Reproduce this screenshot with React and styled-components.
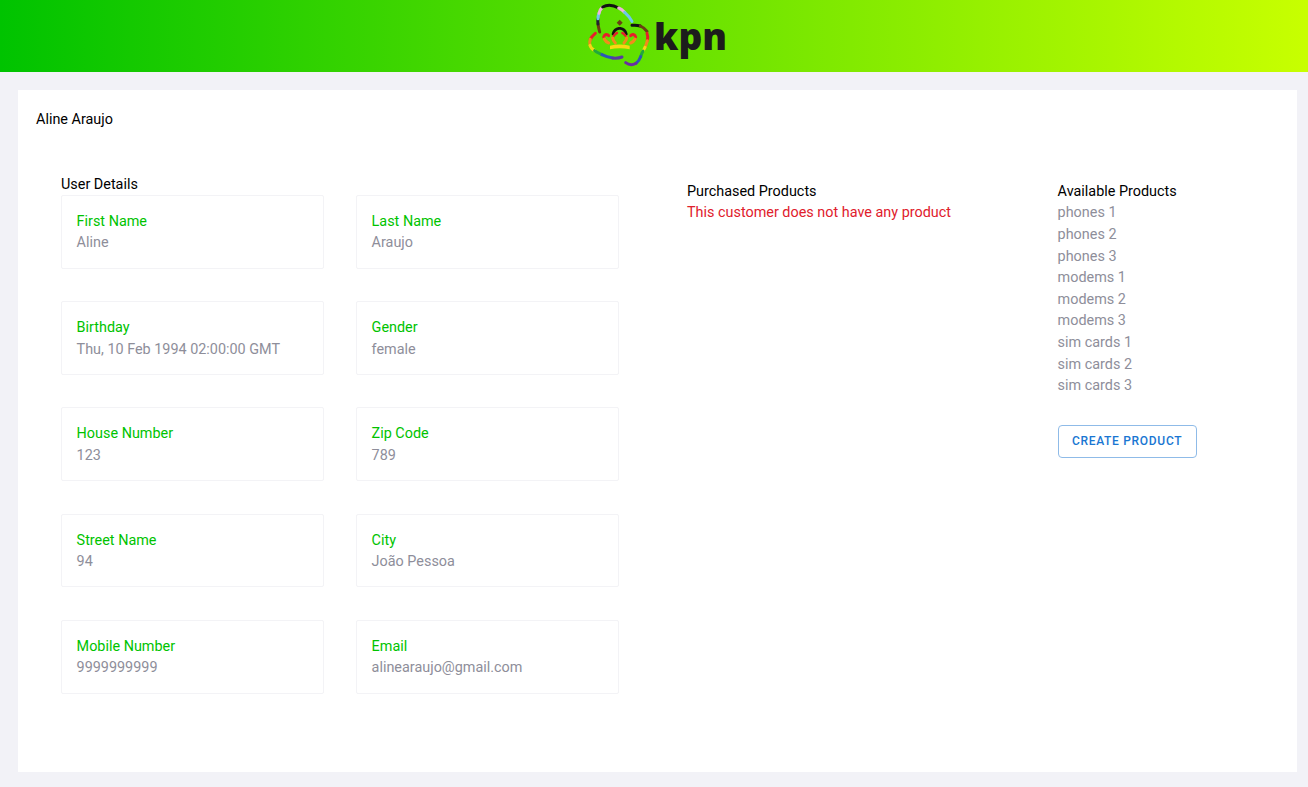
import React from 'react'
import styled, { createGlobalStyle } from 'styled-components';

const Global = createGlobalStyle`
    html, body { margin: 0; padding: 0; }
    body {
        background: #f2f2f7;
        font-family: Roboto, "Liberation Sans", sans-serif;
        font-size: 14.4px;
        line-height: 1.5;
        color: #000;
    }
`;

const Page = styled.div`
    height: 787px;
    display: flex;
    flex-direction: column;
    overflow: hidden;
`;

const Header = styled.header`
    height: 72px;
    flex: none;
    display: flex;
    justify-content: center;
    background: linear-gradient(90deg, #00c300, #c8ff00);
`;

const Logo = styled.div`
    width: 170px;
    margin-left: 2px;
    display: flex;
    align-items: flex-start;
`;

const Mark = styled.svg`
    width: 85px;
    height: 72px;
    flex: none;
    margin-left: 1.5px;
`;

const Wordmark = styled.span`
    font-family: "Open Sans", sans-serif;
    font-weight: 800;
    font-size: 37px;
    line-height: 72px;
    color: #1c1c1c;
    margin-left: -2.5px;
`;

const Main = styled.main`
    flex: 1;
    padding: 18px 11px 15px 18px;
    display: flex;
    min-height: 0;
`;

const Panel = styled.section`
    flex: 1;
    background: #fff;
    padding: 18.6px 18px 18px;
`;

const Columns = styled.div`
    display: grid;
    grid-template-columns: 626px 370.6px 1fr;
    margin: 43.4px 0 0 25px;
`;

const SideColumn = styled.div`
    padding-top: 7.2px;
`;

const DetailGrid = styled.div`
    width: 557.5px;
    margin-top: -0.2px;
    display: grid;
    grid-template-columns: 262.5px 262.5px;
    gap: 32.65px 32.5px;
`;

const DetailCard = styled.div`
    height: 73.6px;
    box-sizing: border-box;
    padding: 14.8px 14.6px;
    border: 1px solid #f3f3f6;
    border-radius: 2px;
`;

const Label = styled.div`
    color: #00c300;
`;

const Value = styled.div`
    color: #8e8e9a;
`;

const ErrorText = styled.div`
    color: #e0202c;
`;

const CreateButton = styled.button`
    display: block;
    width: 139px;
    height: 33px;
    margin-top: 27.8px;
    padding: 0;
    background: #fff;
    border: 1px solid #8fbbe8;
    border-radius: 4px;
    color: #1976d2;
    font-family: Roboto, sans-serif;
    font-size: 12px;
    font-weight: 500;
    letter-spacing: 0.7px;
    text-transform: uppercase;
`;

const details = [
    ['First Name', 'Aline'],
    ['Last Name', 'Araujo'],
    ['Birthday', 'Thu, 10 Feb 1994 02:00:00 GMT'],
    ['Gender', 'female'],
    ['House Number', '123'],
    ['Zip Code', '789'],
    ['Street Name', '94'],
    ['City', 'João Pessoa'],
    ['Mobile Number', '9999999999'],
    ['Email', 'alinearaujo@gmail.com'],
];

const products = [
    'phones 1', 'phones 2', 'phones 3',
    'modems 1', 'modems 2', 'modems 3',
    'sim cards 1', 'sim cards 2', 'sim cards 3',
];

// outline of the logo, one piece per colour
const ribbon = [
    ['#6b3f14', 'M83 96 C81 88 79 80 78 72'],
    ['#222230', 'M78 72 C77 66 77 62 78 56'],
    ['#6fc7ea', 'M78 56 C78 50 79 45 81 40'],
    ['#efb3d8', 'M81 40 C83 32 86 26 92 21'],
    ['#111', 'M92 21 C106 13 124 15 140 24'],
    ['#efb3d8', 'M140 24 C147 27 153 32 158 37'],
    ['#6fc7ea', 'M158 37 C168 46 175 54 180 64'],
    ['#111', 'M180 76 C190 75 198 76 205 78'],
    ['#6b3f14', 'M205 78 C214 82 221 88 225 94'],
    ['#e5202a', 'M225 100 C228 108 228 114 226 122'],
    ['#f28a1c', 'M226 122 C224 130 222 136 219 142'],
    ['#f6d813', 'M219 142 C217 146 215 150 213 153'],
    ['#22a83c', 'M213 153 C210 158 208 164 206 170'],
    ['#2d55b8', 'M206 170 C203 178 198 185 192 190'],
    ['#6a2fa0', 'M192 190 C182 196 170 195 161 188'],
    ['#e5202a', 'M70 100 C64 105 58 111 55 118'],
    ['#f28a1c', 'M55 118 C53 124 52 130 54 136'],
    ['#f6d813', 'M54 136 C56 143 61 148 68 152'],
    ['#22a83c', 'M68 152 C75 157 82 160 90 164'],
    ['#2d55b8', 'M90 164 C100 169 110 172 122 174'],
    ['#5a3aa0', 'M122 174 C132 175 142 174 150 171'],
];

const crown = [
    ['#e5202a', 'M95 111 C97 102 106 101 110 107', 9],
    ['#f28a1c', 'M97 117 C100 123 104 127 110 129', 9],
    ['#111', 'M123 102 C126 90 134 86 141 85', 8],
    ['#111', 'M145 85 C152 86 160 91 163 102', 8],
    ['#e5202a', 'M125 108 C128 104 131 100 135 99', 7],
    ['#e5202a', 'M161 108 C158 104 155 100 151 99', 7],
    ['#f28a1c', 'M122 114 C123 120 126 125 130 129', 9],
    ['#f28a1c', 'M164 114 C163 120 160 125 156 129', 9],
    ['#e5202a', 'M176 107 C180 101 189 102 191 111', 9],
    ['#f28a1c', 'M189 117 C186 123 182 127 176 129', 9],
];

const LogoMark = () => (
    <Mark viewBox="0 0 255 216" fill="none" strokeLinecap="round">
        {ribbon.map(([color, d]) => <path key={d} d={d} stroke={color} strokeWidth="9" />)}
        {crown.map(([color, d, w]) => <path key={d} d={d} stroke={color} strokeWidth={w} />)}
        <path d="M143 59 L152 68 L143 77 L134 68 Z" fill="#6b3f14" />
        <path d="M114 137 C132 132 154 132 173 137 L173 148 C154 144 132 144 114 148 Z" fill="#f6d813" />
    </Mark>
);

const App = () => {
    return (
        <Page>
            <Global />
            <Header>
                <Logo>
                    <LogoMark />
                    <Wordmark>kpn</Wordmark>
                </Logo>
            </Header>
            <Main>
                <Panel>
                    <div>Aline Araujo</div>
                    <Columns>
                        <div>
                            <div>User Details</div>
                            <DetailGrid>
                                {details.map(([label, value]) => (
                                    <DetailCard key={label}>
                                        <Label>{label}</Label>
                                        <Value>{value}</Value>
                                    </DetailCard>
                                ))}
                            </DetailGrid>
                        </div>
                        <SideColumn>
                            <div>Purchased Products</div>
                            <ErrorText>This customer does not have any product</ErrorText>
                        </SideColumn>
                        <SideColumn>
                            <div>Available Products</div>
                            {products.map(p => <Value key={p}>{p}</Value>)}
                            <CreateButton>Create Product</CreateButton>
                        </SideColumn>
                    </Columns>
                </Panel>
            </Main>
        </Page>
    );
};

export default App;
